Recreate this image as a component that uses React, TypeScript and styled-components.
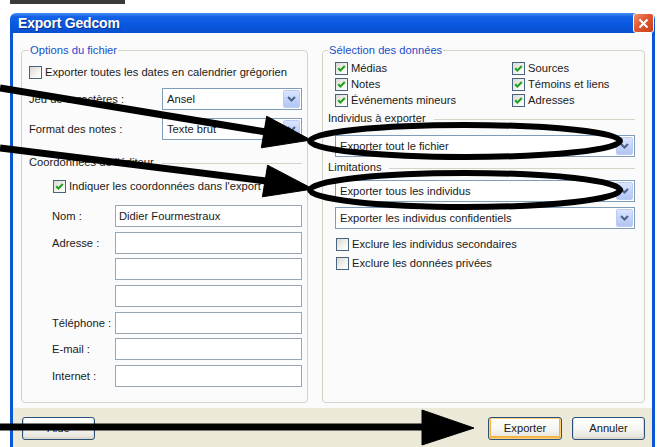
import React from "react";
import styled, { createGlobalStyle } from "styled-components";

const GlobalStyle = createGlobalStyle`
  html, body { margin: 0; padding: 0; background: #ffffff; }
  body {
    font-family: "Liberation Sans", Arial, sans-serif;
    font-size: 11.2px;
    color: #1a1a1a;
  }
  * { box-sizing: border-box; }
`;

const Desktop = styled.div`
  position: relative;
  width: 659px;
  height: 447px;
  overflow: hidden;
  background: #ffffff;
`;

const BackWindowEdge = styled.div`
  margin-left: 10px;
  width: 115px;
  height: 4px;
  background: #3a3a3a;
`;

const Window = styled.div`
  margin: 9px 0 0 10px;
  width: 645px;
`;

const TitleBar = styled.div`
  height: 20px;
  border-radius: 6px 6px 0 0;
  background: linear-gradient(#4a8ff5 0%, #1463e6 18%, #0857df 60%, #0a50cf 100%);
  display: flex;
  align-items: center;
  justify-content: space-between;
  padding: 0 1px 0 8px;
`;

const Title = styled.span`
  color: #ffffff;
  font-weight: bold;
  font-size: 14px;
  text-shadow: 1px 1px 0 #0b2f8c;
  letter-spacing: -0.2px;
`;

const CloseButton = styled.div`
  width: 21px;
  height: 20px;
  border: 1px solid #ffffff;
  border-radius: 3px;
  background: linear-gradient(135deg, #f0916c 0%, #e0572f 45%, #c8401c 100%);
  display: flex;
  align-items: center;
  justify-content: center;
`;

const Frame = styled.div`
  border-left: 3px solid #0b56d6;
  border-right: 3px solid #0b56d6;
  background: #fbfbfb;
`;

const Columns = styled.div`
  display: grid;
  grid-template-columns: 287px 323px;
  column-gap: 14px;
  padding: 10px 7px 5px 8px;
`;

const Group = styled.fieldset<{ $padLeft: number; $padRight: number }>`
  margin: 0;
  min-width: 0;
  border: 1px solid #d3d3c7;
  border-radius: 4px;
  padding: 0 ${(p) => p.$padRight}px 15px ${(p) => p.$padLeft}px;
  display: flex;
  flex-direction: column;
`;

const Legend = styled.legend`
  padding: 0 1px;
  margin: 0;
  line-height: 14px;
  color: #1a4fc9;
`;

const CheckRow = styled.div<{ $top: number; $indent?: number }>`
  display: flex;
  align-items: center;
  gap: 3px;
  height: 16px;
  margin-top: ${(p) => p.$top}px;
  padding-left: ${(p) => p.$indent ?? 0}px;
  white-space: nowrap;
`;

const Box = styled.span`
  width: 13px;
  height: 13px;
  flex: none;
  border: 1px solid #4a6480;
  background: linear-gradient(135deg, #d9d9d2 0%, #f4f4f0 60%, #ffffff 100%);
  display: flex;
  align-items: center;
  justify-content: center;
`;

const FieldRow = styled.div<{ $top: number }>`
  display: grid;
  grid-template-columns: 133px 140px;
  align-items: center;
  margin-top: ${(p) => p.$top}px;
`;

const SelectBox = styled.div<{ $top?: number; $indent?: number }>`
  height: 22px;
  border: 1px solid #7f9db9;
  background: #ffffff;
  display: flex;
  align-items: center;
  padding: 1px 1px 1px 4px;
  margin-top: ${(p) => p.$top ?? 0}px;
  margin-left: ${(p) => p.$indent ?? 0}px;
  white-space: nowrap;
`;

const SelectText = styled.span`
  flex: 1;
`;

const DropButton = styled.span`
  width: 17px;
  height: 18px;
  border: 1px solid #bccbf2;
  border-radius: 2px;
  background: linear-gradient(#dbe6fd 0%, #c2d4fb 50%, #b2c6f3 100%);
  display: flex;
  align-items: center;
  justify-content: center;
`;

const SectionHeader = styled.div<{ $top: number }>`
  display: flex;
  align-items: center;
  height: 14px;
  margin-top: ${(p) => p.$top}px;
  white-space: nowrap;

  &::after {
    content: "";
    flex: 1;
    margin: 3px 0 0 8px;
    border-top: 1px solid #d3d3c7;
  }
`;

const ContactGrid = styled.div`
  display: grid;
  grid-template-columns: 63px 187px;
  grid-auto-rows: 22px;
  row-gap: 4.67px;
  align-items: center;
  padding-left: 23px;
  margin-top: 11px;
`;

const TextInput = styled.div`
  height: 22px;
  border: 1px solid #98a6b6;
  background: #ffffff;
  display: flex;
  align-items: center;
  padding-left: 3px;
  white-space: nowrap;
`;

const DataGrid = styled.div`
  display: grid;
  grid-template-columns: 177px 1fr;
  grid-auto-rows: 16px;
  margin: 3px 0 0 7px;
`;

const GridCheck = styled.div`
  display: flex;
  align-items: center;
  gap: 3px;
  white-space: nowrap;
`;

const Footer = styled.div`
  background: #ece9d8;
  height: 39px;
  padding: 9px 7px 0 9px;
  display: flex;
  justify-content: space-between;
  align-items: flex-start;
`;

const ButtonGroup = styled.div`
  display: flex;
  gap: 10px;
`;

const Button = styled.div<{ $width: number; $default?: boolean }>`
  width: ${(p) => p.$width}px;
  height: 23px;
  border: 1px solid #28507a;
  border-radius: 3px;
  background: linear-gradient(#ffffff 0%, #f5f5f1 55%, #e3e0d6 100%);
  display: flex;
  align-items: center;
  justify-content: center;
  box-shadow: ${(p) =>
    p.$default
      ? "inset 0 0 0 1px #fbd27a, inset 0 -1px 0 2px #f3b54a"
      : "inset 0 -1px 0 1px #dcd8cc"};
`;

const Annotations = styled.svg`
  position: absolute;
  left: 0;
  top: 0;
  pointer-events: none;
`;

const Check = () => (
  <svg width="11" height="11" viewBox="0 0 11 11">
    <path d="M2.2 5.2 L4.4 7.4 L8.8 3" fill="none" stroke="#21a121" strokeWidth="2.1" />
  </svg>
);

const CheckBox = ({ checked }: { checked?: boolean }) => <Box>{checked ? <Check /> : null}</Box>;

const Chevron = () => (
  <svg width="11" height="8" viewBox="0 0 11 8">
    <path d="M2 2 L5.5 5.5 L9 2" fill="none" stroke="#4d6185" strokeWidth="2" />
  </svg>
);

const Select = ({ value, top, indent }: { value: string; top?: number; indent?: number }) => (
  <SelectBox $top={top} $indent={indent}>
    <SelectText>{value}</SelectText>
    <DropButton>
      <Chevron />
    </DropButton>
  </SelectBox>
);

const contactRows: [string, string][] = [
  ["Nom :", "Didier Fourmestraux"],
  ["Adresse :", ""],
  ["", ""],
  ["", ""],
  ["Téléphone :", ""],
  ["E-mail :", ""],
  ["Internet :", ""],
];

const dataOptions = [
  "Médias",
  "Sources",
  "Notes",
  "Témoins et liens",
  "Événements mineurs",
  "Adresses",
];

export default function App() {
  return (
    <Desktop>
      <GlobalStyle />
      <BackWindowEdge />
      <Window>
        <TitleBar>
          <Title>Export Gedcom</Title>
          <CloseButton>
            <svg width="11" height="11" viewBox="0 0 11 11">
              <path d="M1.5 1.5 L9.5 9.5 M9.5 1.5 L1.5 9.5" stroke="#ffffff" strokeWidth="2" />
            </svg>
          </CloseButton>
        </TitleBar>
        <Frame>
          <Columns>
            <Group $padLeft={7} $padRight={5}>
              <Legend>Options du fichier</Legend>
              <CheckRow $top={7}>
                <CheckBox />
                <span>Exporter toutes les dates en calendrier grégorien</span>
              </CheckRow>
              <FieldRow $top={8}>
                <span>Jeu de caractères :</span>
                <Select value="Ansel" />
              </FieldRow>
              <FieldRow $top={8}>
                <span>Format des notes :</span>
                <Select value="Texte brut" />
              </FieldRow>
              <SectionHeader $top={15}>Coordonnées de l'éditeur</SectionHeader>
              <CheckRow $top={9} $indent={24}>
                <CheckBox checked />
                <span>Indiquer les coordonnées dans l'export</span>
              </CheckRow>
              <ContactGrid>
                {contactRows.map(([label, value], i) => (
                  <React.Fragment key={i}>
                    <span>{label}</span>
                    <TextInput>{value}</TextInput>
                  </React.Fragment>
                ))}
              </ContactGrid>
            </Group>

            <Group $padLeft={5} $padRight={9}>
              <Legend>Sélection des données</Legend>
              <DataGrid>
                {dataOptions.map((o) => (
                  <GridCheck key={o}>
                    <CheckBox checked />
                    <span>{o}</span>
                  </GridCheck>
                ))}
              </DataGrid>
              <SectionHeader $top={3}>Individus à exporter</SectionHeader>
              <Select value="Exporter tout le fichier" top={10} indent={7} />
              <SectionHeader $top={3}>Limitations</SectionHeader>
              <Select value="Exporter tous les individus" top={6} indent={7} />
              <Select value="Exporter les individus confidentiels" top={5} indent={7} />
              <CheckRow $top={7} $indent={8}>
                <CheckBox />
                <span>Exclure les individus secondaires</span>
              </CheckRow>
              <CheckRow $top={3} $indent={8}>
                <CheckBox />
                <span>Exclure les données privées</span>
              </CheckRow>
            </Group>
          </Columns>
          <Footer>
            <Button $width={73}>Aide</Button>
            <ButtonGroup>
              <Button $width={74} $default>
                Exporter
              </Button>
              <Button $width={73}>Annuler</Button>
            </ButtonGroup>
          </Footer>
        </Frame>
      </Window>

      <Annotations width="659" height="447" viewBox="0 0 659 447">
        <g fill="#000000" stroke="#000000">
          <line x1="0" y1="88" x2="266" y2="132" strokeWidth="7" />
          <polygon points="266.7,116.2 311,140 261.3,147.8" strokeWidth="1" />
          <line x1="0" y1="148" x2="266" y2="181" strokeWidth="7" />
          <polygon points="267.6,165.2 313,189 262.4,196.8" strokeWidth="1" />
          <line x1="0" y1="427" x2="424" y2="427" strokeWidth="7" />
          <polygon points="422,410 474,428 422,445" strokeWidth="1" />
        </g>
        <g fill="none" stroke="#000000" strokeWidth="6">
          <ellipse cx="465" cy="141" rx="155" ry="16" />
          <ellipse cx="465" cy="190" rx="155" ry="17" />
        </g>
      </Annotations>
    </Desktop>
  );
}
